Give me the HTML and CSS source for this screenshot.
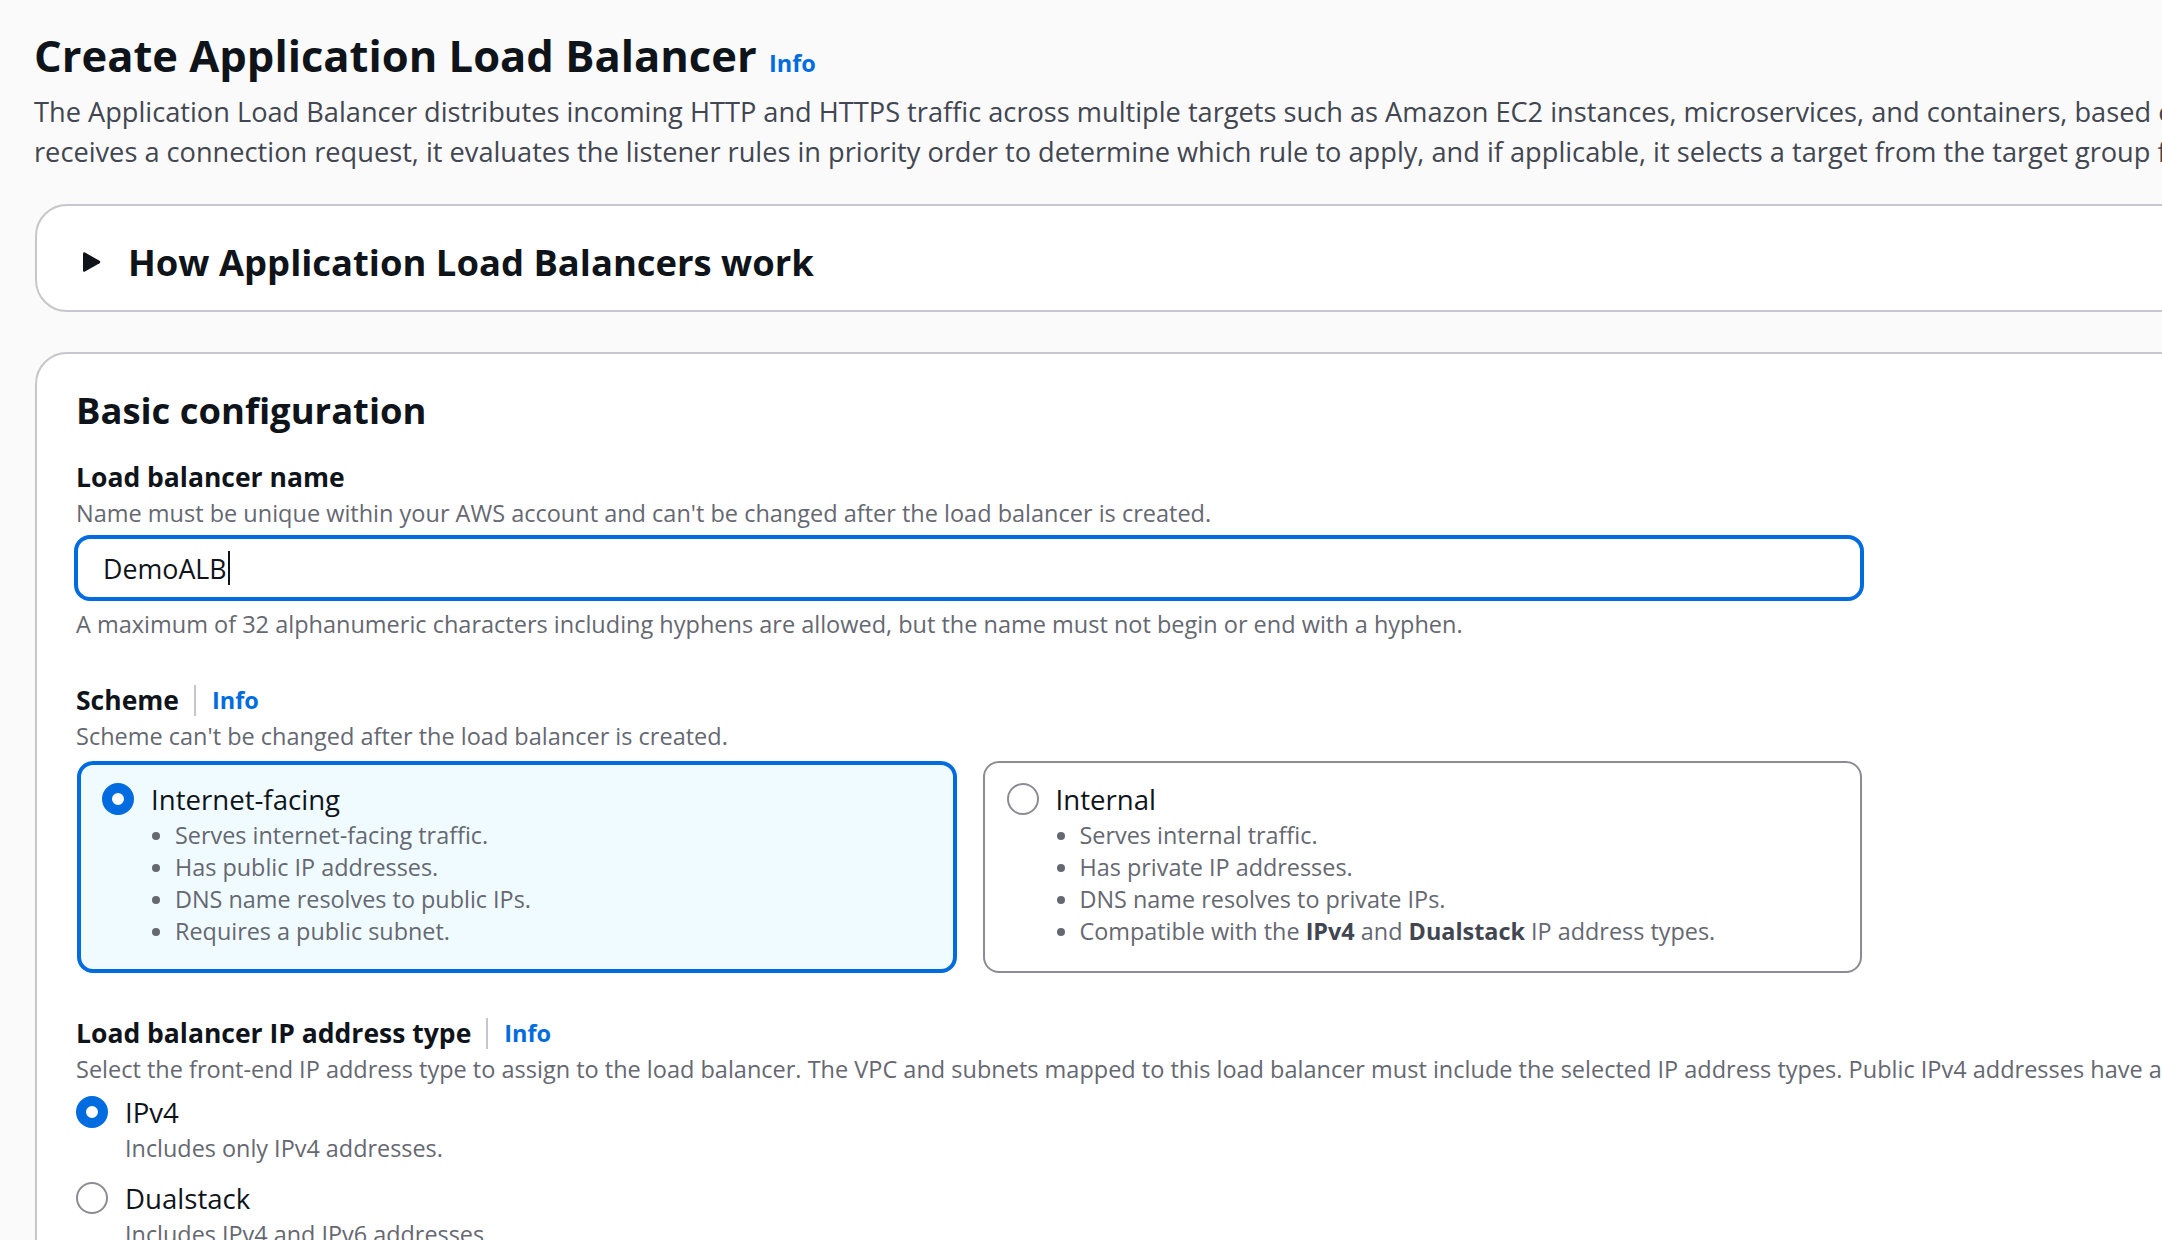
FILE: index.html
```html
<!DOCTYPE html>
<html lang="en">
<head>
<meta charset="utf-8">
<title>Create Application Load Balancer</title>
<link rel="stylesheet" href="styles.css">
</head>
<body>
<main class="page">
  <header class="page-header">
    <h1 class="title">Create Application Load Balancer <a class="info-link info-title" href="#">Info</a></h1>
    <p class="page-desc">The Application Load Balancer distributes incoming HTTP and HTTPS traffic across multiple targets such as Amazon EC2 instances, microservices, and containers, based on request attributes. When the load balancer<br>receives a connection request, it evaluates the listener rules in priority order to determine which rule to apply, and if applicable, it selects a target from the target group for the rule action.</p>
  </header>

  <section class="container expandable">
    <div class="expand-header">
      <svg class="caret-icon" width="20" height="24" viewBox="0 0 20 24" aria-hidden="true">
        <path d="M3 2.5 L17.5 10.8 Q19.2 12 17.5 13.2 L3 21.5 Q1 22.6 1 20.3 L1 3.7 Q1 1.4 3 2.5 Z" fill="#0f141a"/>
      </svg>
      <h2 class="section-title">How Application Load Balancers work</h2>
    </div>
  </section>

  <section class="container config">
    <h2 class="section-title">Basic configuration</h2>

    <div class="field field-name">
      <div class="label">Load balancer name</div>
      <div class="desc">Name must be unique within your AWS account and can't be changed after the load balancer is created.</div>
      <div class="input"><span class="input-value">DemoALB</span><span class="text-caret"></span></div>
      <div class="desc constraint">A maximum of 32 alphanumeric characters including hyphens are allowed, but the name must not begin or end with a hyphen.</div>
    </div>

    <div class="field field-scheme">
      <div class="label label-info"><span>Scheme</span><span class="divider"></span><a class="info-link" href="#">Info</a></div>
      <div class="desc">Scheme can't be changed after the load balancer is created.</div>
      <div class="tiles">
        <div class="tile tile-selected">
          <div class="tile-head"><span class="radio radio-on"></span><span class="tile-label">Internet-facing</span></div>
          <ul class="tile-list">
            <li>Serves internet-facing traffic.</li>
            <li>Has public IP addresses.</li>
            <li>DNS name resolves to public IPs.</li>
            <li>Requires a public subnet.</li>
          </ul>
        </div>
        <div class="tile">
          <div class="tile-head"><span class="radio"></span><span class="tile-label">Internal</span></div>
          <ul class="tile-list">
            <li>Serves internal traffic.</li>
            <li>Has private IP addresses.</li>
            <li>DNS name resolves to private IPs.</li>
            <li>Compatible with the <b>IPv4</b> and <b>Dualstack</b> IP address types.</li>
          </ul>
        </div>
      </div>
    </div>

    <div class="field field-ip">
      <div class="label label-info"><span>Load balancer IP address type</span><span class="divider"></span><a class="info-link" href="#">Info</a></div>
      <div class="desc nowrap">Select the front-end IP address type to assign to the load balancer. The VPC and subnets mapped to this load balancer must include the selected IP address types. Public IPv4 addresses have an additional cost.</div>
      <div class="radio-group">
        <div class="radio-item">
          <div class="radio-row"><span class="radio radio-on"></span><span class="radio-label">IPv4</span></div>
          <div class="radio-desc">Includes only IPv4 addresses.</div>
        </div>
        <div class="radio-item">
          <div class="radio-row"><span class="radio"></span><span class="radio-label">Dualstack</span></div>
          <div class="radio-desc">Includes IPv4 and IPv6 addresses.</div>
        </div>
      </div>
    </div>
  </section>
</main>
</body>
</html>
```

FILE: styles.css
```css
* { box-sizing: border-box; }

html, body {
  margin: 0;
  padding: 0;
  height: 100%;
  overflow: hidden;
}

body {
  background: #fafafa;
  font-family: "Open Sans", "Noto Sans", sans-serif;
  color: #0f141a;
}

.page {
  width: 2600px;
  padding: 30px 0 0 34px;
}

.page-header {
  margin: 0;
}

.title {
  margin: 0;
  font-size: 43.5px;
  line-height: 52px;
  font-weight: 700;
  color: #0f141a;
}

.info-link {
  color: #006ce0;
  font-weight: 700;
  font-size: 23.5px;
  text-decoration: none;
}

.info-title {
  margin-left: 1px;
}

.page-desc {
  margin: 3px 0 0;
  font-size: 27.2px;
  line-height: 40px;
  color: #424650;
  white-space: nowrap;
}

.container {
  background: #ffffff;
  border: 2px solid #c6c6cd;
  border-radius: 32px;
  margin-left: 1px;
}

.expandable {
  margin-top: 32px;
  padding: 34px 40px 26px 45px;
}

.expand-header {
  display: flex;
  align-items: center;
  gap: 26px;
}

.caret-icon {
  flex: none;
}

.section-title {
  margin: 0;
  font-size: 36.4px;
  line-height: 44px;
  font-weight: 700;
  color: #0f141a;
}

.config {
  margin-top: 40px;
  padding: 34px 40px 40px 39px;
  min-height: 1000px;
}

.field {
  margin-top: 25px;
}

.field-name .desc:first-of-type {
  margin-top: 2px;
}

.field-scheme, .field-ip {
  margin-top: 40px;
}

.label {
  font-size: 26.5px;
  line-height: 40px;
  font-weight: 700;
  color: #0f141a;
}

.label-info {
  display: flex;
  align-items: center;
}

.divider {
  width: 2px;
  height: 31px;
  background: #c6c6cd;
  margin: 0 16px 0 15px;
}

.desc {
  font-size: 23.5px;
  line-height: 32px;
  color: #656871;
}

.nowrap {
  white-space: nowrap;
}

.input {
  margin: 6px 0 0 -2px;
  width: 1790px;
  height: 66px;
  border: 4px solid #006ce0;
  border-radius: 16px;
  background: #ffffff;
  padding: 0 25px;
  display: flex;
  align-items: center;
  font-size: 26.8px;
  color: #0f141a;
}

.text-caret {
  display: inline-block;
  width: 2px;
  height: 34px;
  background: #0f141a;
  margin-left: 1px;
}

.constraint {
  margin-top: 7px;
}

.tiles {
  margin: 9px 0 0 1px;
  width: 1785px;
  display: grid;
  grid-template-columns: 1fr 1fr;
  gap: 26px;
}

.tile {
  border: 2px solid #8c8c94;
  border-radius: 16px;
  background: #ffffff;
  padding: 16px 22px 24px 22px;
}

.tile-selected {
  border: 4px solid #006ce0;
  background: #f0fbff;
  padding: 14px 20px 22px 21px;
}

.tile-head, .radio-row {
  display: flex;
  align-items: center;
  gap: 17px;
  font-size: 27.6px;
  line-height: 40px;
  color: #0f141a;
}

.radio {
  flex: none;
  width: 32px;
  height: 32px;
  border-radius: 50%;
  border: 2px solid #8c8c94;
  background: #ffffff;
}

.radio-on {
  border: 10px solid #006ce0;
}

.tile-list {
  margin: 0;
  padding: 0 0 0 73px;
  font-size: 23.4px;
  line-height: 32px;
  color: #656871;
}

.tile-list b {
  font-weight: 700;
  color: #424650;
}

.radio-group {
  margin-top: 7px;
}

.radio-item + .radio-item {
  margin-top: 14px;
}

.radio-desc {
  padding-left: 49px;
  font-size: 23.4px;
  line-height: 32px;
  color: #656871;
}
```
